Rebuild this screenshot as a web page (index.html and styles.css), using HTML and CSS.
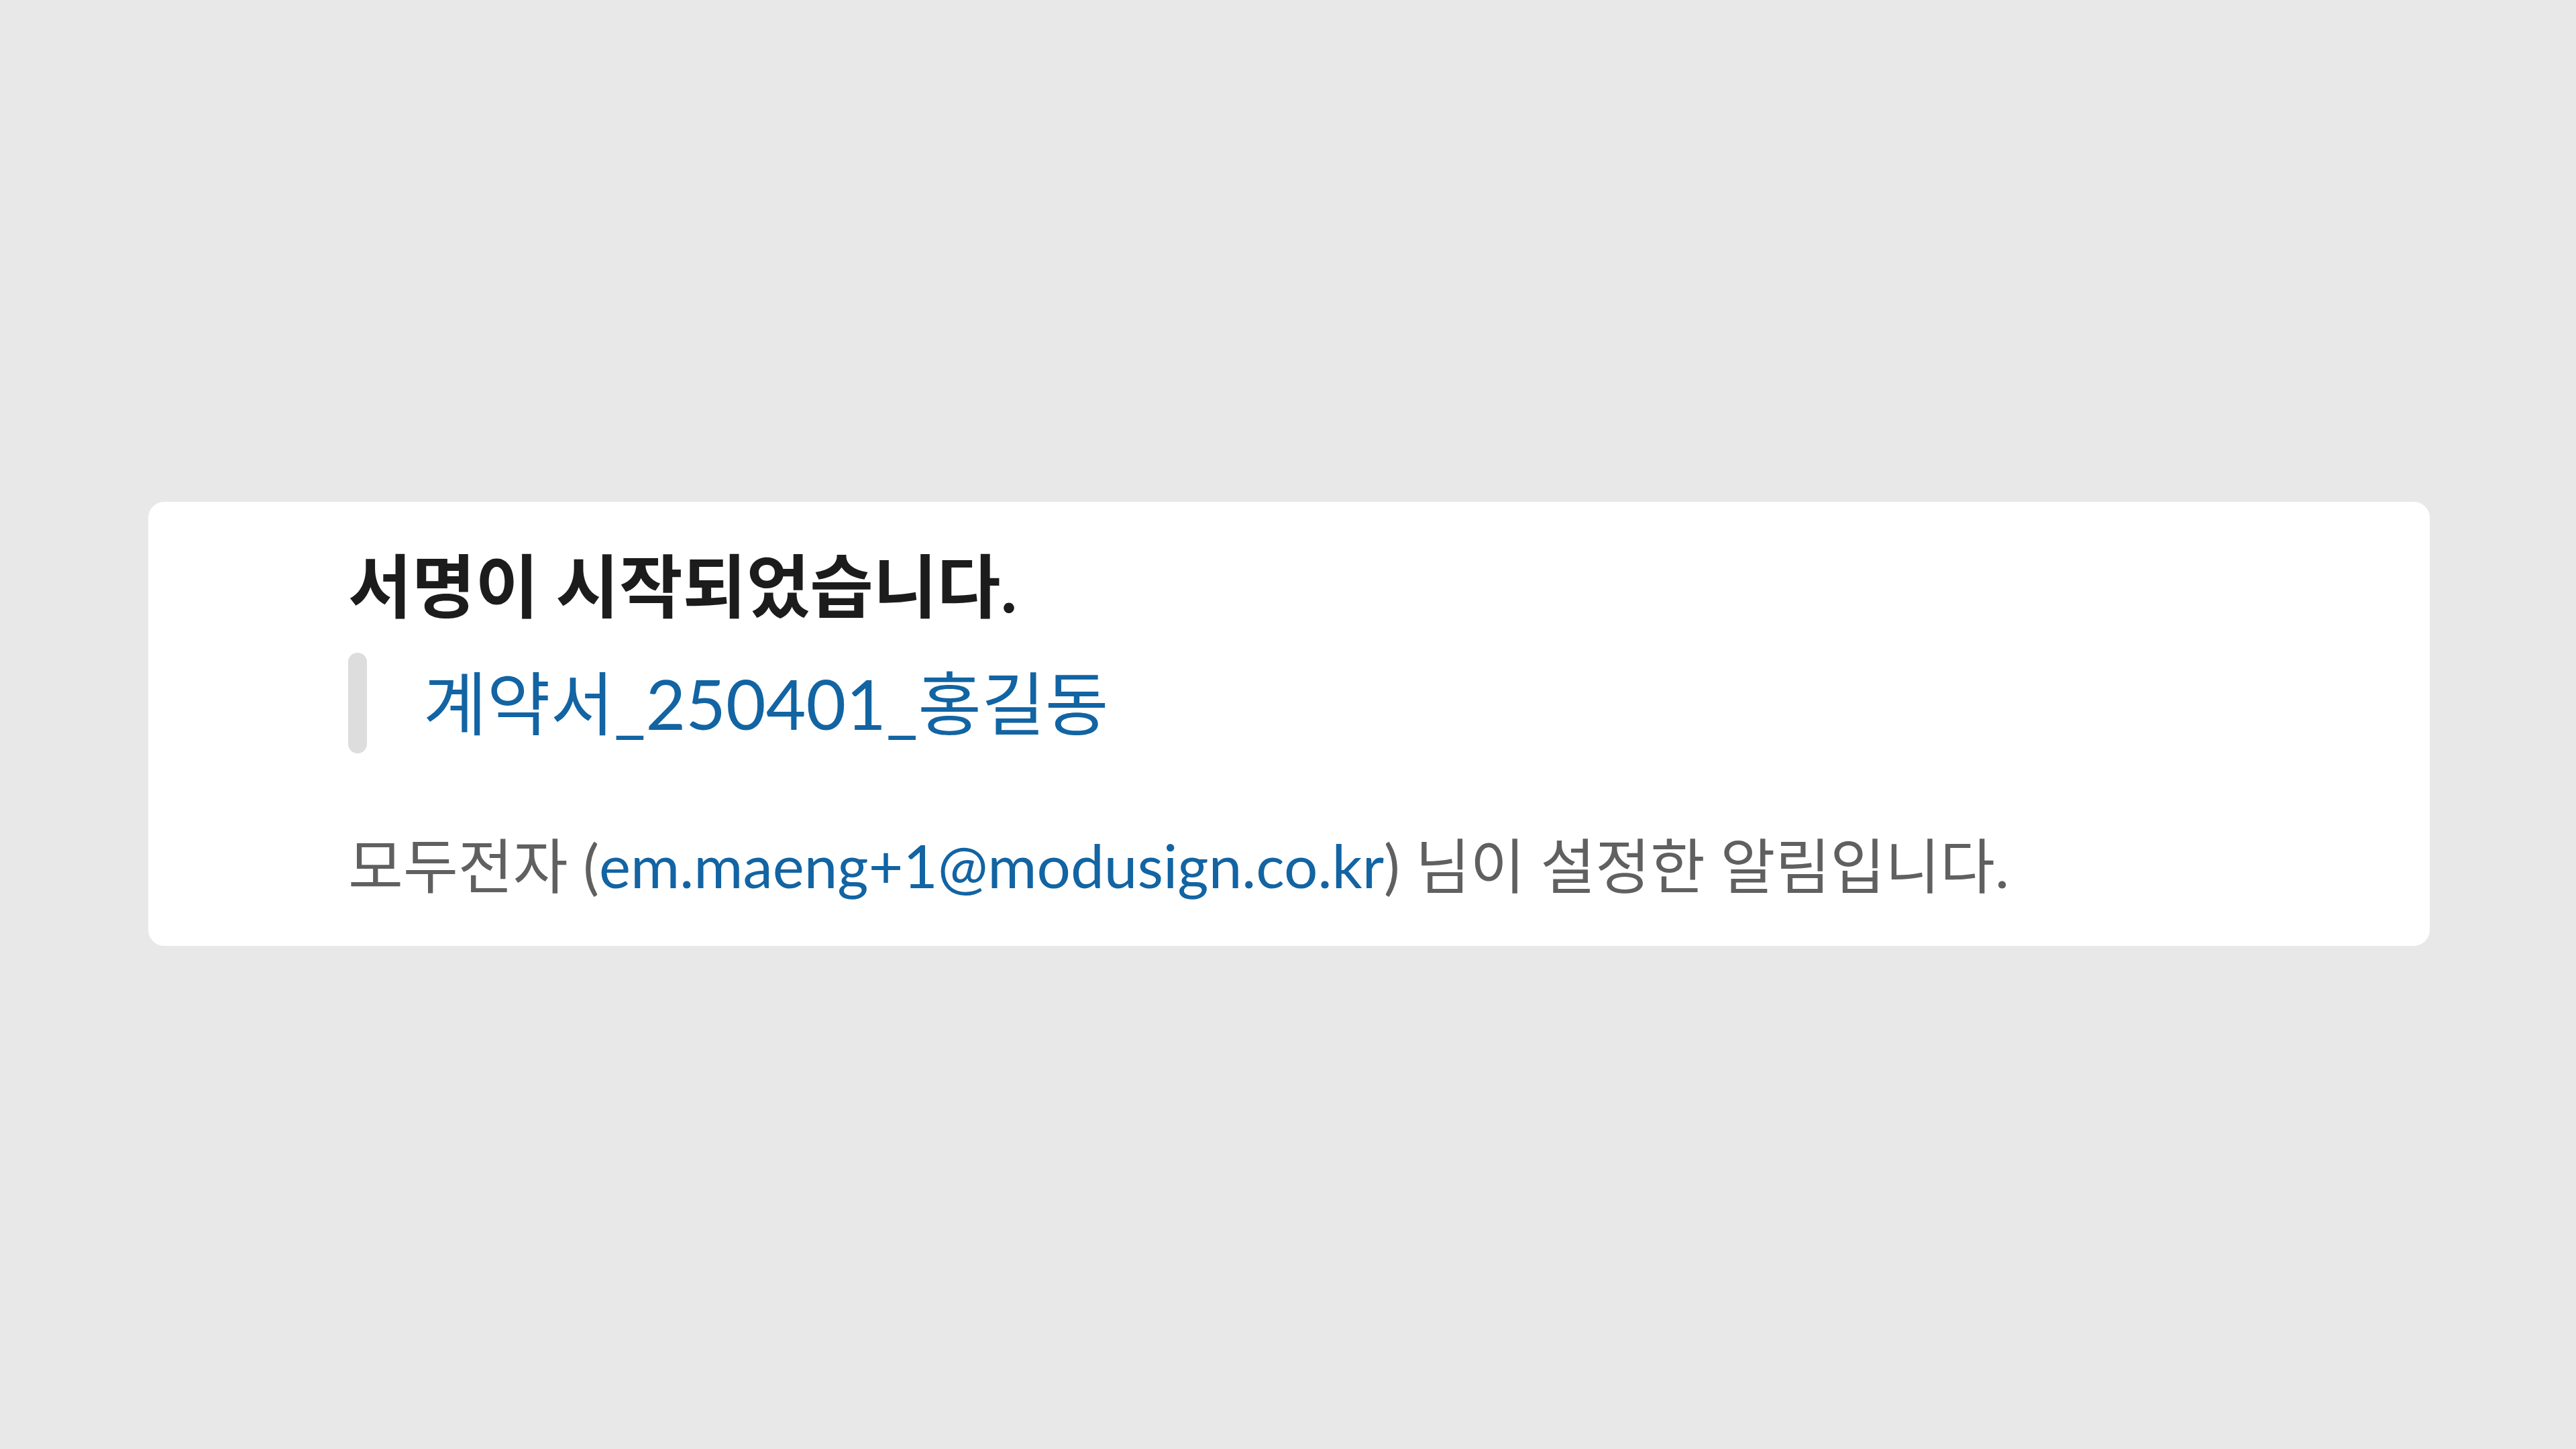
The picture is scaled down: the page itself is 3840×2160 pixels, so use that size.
FILE: index.html
```html
<!DOCTYPE html>
<html lang="ko">

<head>
    <meta charset="UTF-8">
    <meta name="viewport" content="width=device-width, initial-scale=1.0">
    <title>서명 알림</title>
    <link rel="stylesheet" href="styles.css">
</head>

<body>
<div class="page">
    <div class="card">
        <h2 class="card-title">서명이 시작되었습니다.</h2>
        <div class="quote">
            <span class="quote-bar"></span>
            <a class="doc-link" href="#">계약서_250401_홍길동</a>
        </div>
        <p class="note">모두전자 (<a class="mail-link" href="#">em.maeng+1@modusign.co.kr</a>) 님이 설정한 알림입니다.</p>
    </div>
</div>
</body>

</html>
```

FILE: styles.css
```css
body {
    margin: 0;
    background-color: #e8e8e8;
    font-family: Lato, "Noto Sans CJK KR", sans-serif;
}

.page {
    padding: 748px 218px 0 221px;
}

.card {
    background-color: #ffffff;
    border-radius: 24px;
    padding: 64px 40px 67px 298px;
}

.card-title {
    margin: 0;
    font-size: 103px;
    line-height: 1.2;
    font-weight: 700;
    color: #1d1c1d;
}

.quote {
    display: flex;
    align-items: center;
    margin-top: 37px;
    height: 150px;
}

.quote-bar {
    width: 28px;
    height: 150px;
    border-radius: 14px;
    background-color: #dddddd;
}

.doc-link {
    margin-left: 84px;
    font-size: 103px;
    line-height: 150px;
    color: #1264a3;
    text-decoration: none;
}

.note {
    margin: 114px 0 0;
    font-size: 89px;
    line-height: 1.2;
    color: #616061;
}

.mail-link {
    color: #1264a3;
    text-decoration: none;
}
```
